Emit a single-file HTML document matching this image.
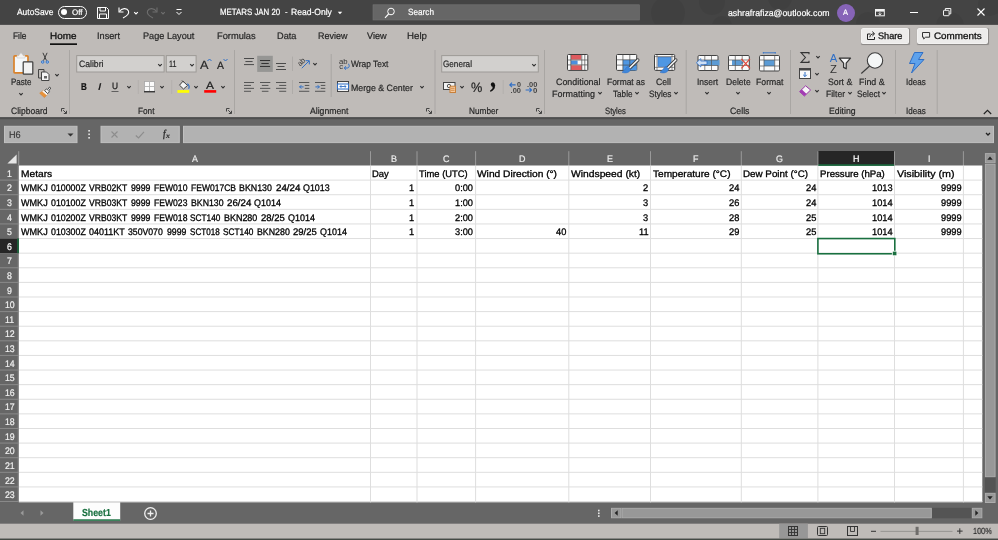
<!DOCTYPE html>
<html><head><meta charset="utf-8"><title>METARS JAN 20 - Excel</title>
<style>
html,body{margin:0;padding:0;}
body{width:998px;height:540px;overflow:hidden;position:relative;background:#666;font-family:"Liberation Sans",sans-serif;}
.a{position:absolute;box-sizing:border-box;}
svg.a{overflow:visible;}
.t{position:absolute;white-space:pre;transform-origin:0 50%;display:block;line-height:20px;text-rendering:geometricPrecision;-webkit-text-stroke:0.2px currentColor;}
#w{position:absolute;left:0;top:0;width:998px;height:540px;will-change:transform;}
</style></head><body><div id="w">
<svg class="a" style="left:0.00px;top:0.00px" width="998" height="540" viewBox="0 0 998 540"><rect x="0" y="0" width="998" height="540" fill="#666666"/>
<rect x="0" y="0" width="998" height="24.9" fill="#444444"/>
<rect x="0" y="24.9" width="998" height="92.4" fill="#bfbbb8"/>
<rect x="0" y="117.2" width="998" height="2" fill="#4e4e4e"/>
<rect x="0" y="523.7" width="998" height="15" fill="#bfbbb8"/>
<rect x="779.2" y="523.7" width="28.7" height="15" fill="#979797"/>
<rect x="0" y="538.7" width="998" height="1.3" fill="#454a45"/></svg>
<svg class="a" style="left:0;top:0;overflow:hidden" width="998" height="24" viewBox="0 0 998 24"><g fill="#000" fill-opacity="0.055"><circle cx="668" cy="13" r="17"/><circle cx="712" cy="2" r="13"/><circle cx="722" cy="26" r="10"/><circle cx="780" cy="-2" r="12"/><circle cx="868" cy="24" r="12"/><circle cx="950" cy="26" r="14"/><circle cx="990" cy="4" r="12"/></g></svg>
<span class="t" style="left:16.50px;top:2.25px;font-size:9px;color:#fff;transform:scaleX(0.9355);">AutoSave</span>
<div class="a" style="left:58.00px;top:6.00px;width:28.50px;height:12.50px;border:1px solid #fff;border-radius:7px;"></div>
<div class="a" style="left:61.00px;top:9.20px;width:6.00px;height:6.00px;background:#fff;border-radius:50%;"></div>
<span class="t" style="left:72.00px;top:3.25px;font-size:8px;color:#fff;transform:scaleX(0.9943);">Off</span>
<svg class="a" style="left:97.00px;top:6.50px" width="12" height="12" viewBox="0 0 12 12"><path d="M0.5 0.5 H9.5 L11.5 2.5 V11.5 H0.5 Z" fill="none" stroke="#fff" stroke-width="1"/><path d="M3 0.5 V4 H8.5 V0.5 M2.5 11.5 V7 H9.5 V11.5" fill="none" stroke="#fff" stroke-width="1"/></svg>
<svg class="a" style="left:118.00px;top:6.00px" width="13" height="13" viewBox="0 0 13 13"><path d="M1 1.5 V6 H5.5" fill="none" stroke="#fff" stroke-width="1.1"/><path d="M1.5 5.5 C3.5 2 9 1.5 10.5 5 C11.5 8 8 10.5 5 12" fill="none" stroke="#fff" stroke-width="1.1"/></svg>
<svg class="a" style="left:131.50px;top:8.50px" width="8" height="8" viewBox="0 0 8 8"><path d="M2.2 3.1 L4 4.9 L5.8 3.1" fill="none" stroke="#fff" stroke-width="1.15"/></svg>
<svg class="a" style="left:146.00px;top:6.00px" width="13" height="13" viewBox="0 0 13 13"><path d="M11 1.5 V6 H6.5" fill="none" stroke="#6e6e6e" stroke-width="1.1"/><path d="M10.5 5.5 C8.5 2 3 1.5 1.5 5 C0.5 8 4 10.5 7 12" fill="none" stroke="#6e6e6e" stroke-width="1.1"/></svg>
<svg class="a" style="left:159.00px;top:8.50px" width="8" height="8" viewBox="0 0 8 8"><path d="M2.2 3.1 L4 4.9 L5.8 3.1" fill="none" stroke="#6e6e6e" stroke-width="1.15"/></svg>
<svg class="a" style="left:175.00px;top:8.00px" width="8" height="8" viewBox="0 0 8 8"><path d="M1.5 1.5 H6.5" stroke="#fff" stroke-width="1"/><path d="M1.5 4 L4 6.5 L6.5 4" fill="none" stroke="#fff" stroke-width="1"/></svg>
<div class="a" style="left:0;top:0"><span class="t" style="left:219.50px;top:2.25px;font-size:9px;color:#fff;transform:scaleX(0.8744);">METARS JAN 20</span> 
<span class="t" style="left:284.60px;top:2.25px;font-size:9px;color:#fff;transform:scaleX(0.8624);">-</span> 
<span class="t" style="left:291.40px;top:2.25px;font-size:9px;color:#fff;transform:scaleX(0.9507);">Read-Only</span></div>
<svg class="a" style="left:336.50px;top:11.00px" width="6" height="4" viewBox="0 0 6 4"><path d="M0.8 0.8 L3 3.2 L5.2 0.8 Z" fill="#fff"/></svg>
<svg class="a" style="left:372px;top:4px" width="269" height="17"><g transform="translate(0.70 0.50)"><rect x="0.3" y="0.3" width="266.40" height="15.20" fill="#666666" stroke="#747474" stroke-width="0.6"/></g></svg>
<svg class="a" style="left:384.00px;top:6.50px" width="12" height="12" viewBox="0 0 12 12"><circle cx="7" cy="4.5" r="3.3" fill="none" stroke="#fff" stroke-width="1"/><path d="M4.6 7 L1 10.8" stroke="#fff" stroke-width="1.1"/></svg>
<span class="t" style="left:408.00px;top:2.25px;font-size:9px;color:#fff;transform:scaleX(0.9113);">Search</span>
<span class="t" style="left:728.00px;top:3.25px;font-size:9px;color:#fff;transform:scaleX(0.9697);">ashrafrafiza@outlook.com</span>
<div class="a" style="left:836.50px;top:3.50px;width:18.00px;height:18.00px;background:#8764b8;border-radius:50%;"></div>
<span class="t" style="left:843.00px;top:3.25px;font-size:8px;color:#fff;transform:scaleX(0.9328);">A</span>
<svg class="a" style="left:875.00px;top:8.50px" width="10" height="8" viewBox="0 0 10 8"><rect x="0.5" y="0.5" width="8.8" height="6.3" fill="none" stroke="#f2f2f2" stroke-width="1"/><rect x="1" y="1" width="8" height="1.6" fill="#f2f2f2"/><path d="M4.9 3.2 V5.8 M3.4 4.5 L4.9 6 L6.4 4.5" stroke="#f2f2f2" stroke-width="0.9" fill="none"/></svg>
<svg class="a" style="left:910px;top:12px" width="10" height="3"><g transform="translate(0.00 0.00)"><rect x="0" y="0" width="8.00" height="1.00" fill="#fff"/></g></svg>
<svg class="a" style="left:943.30px;top:8.20px" width="9" height="9" viewBox="0 0 9 9"><rect x="0.5" y="2.3" width="5.6" height="5.4" rx="0.6" fill="none" stroke="#f2f2f2" stroke-width="1"/><path d="M2.4 2.3 V0.5 H7.8 V5.8 H6.1" fill="none" stroke="#f2f2f2" stroke-width="1"/></svg>
<svg class="a" style="left:976.50px;top:8.00px" width="8" height="8" viewBox="0 0 8 8"><path d="M0.5 0.5 L7.5 7.5 M7.5 0.5 L0.5 7.5" stroke="#fff" stroke-width="1.1"/></svg>
<span class="t" style="left:12.50px;top:26.25px;font-size:9.4px;color:#262626;transform:scaleX(0.8920);">File</span>
<span class="t" style="left:50.00px;top:26.25px;font-size:9.4px;color:#111;transform:scaleX(1.0559);-webkit-text-stroke:0.3px #111;">Home</span>
<svg class="a" style="left:50px;top:43px" width="29" height="3"><g transform="translate(0.00 0.30)"><rect x="0" y="0" width="27.00" height="1.70" fill="#111"/></g></svg>
<span class="t" style="left:97.00px;top:26.25px;font-size:9.4px;color:#262626;transform:scaleX(0.9787);">Insert</span>
<span class="t" style="left:143.00px;top:26.25px;font-size:9.4px;color:#262626;transform:scaleX(0.9757);">Page Layout</span>
<span class="t" style="left:216.50px;top:26.25px;font-size:9.4px;color:#262626;transform:scaleX(0.9898);">Formulas</span>
<span class="t" style="left:276.80px;top:26.25px;font-size:9.4px;color:#262626;transform:scaleX(0.9808);">Data</span>
<span class="t" style="left:317.50px;top:26.25px;font-size:9.4px;color:#262626;transform:scaleX(0.9568);">Review</span>
<span class="t" style="left:367.00px;top:26.25px;font-size:9.4px;color:#262626;transform:scaleX(0.9797);">View</span>
<span class="t" style="left:407.00px;top:26.25px;font-size:9.4px;color:#262626;transform:scaleX(1.0354);">Help</span>
<div class="a" style="left:861.00px;top:28.00px;width:48.20px;height:16.00px;background:#edeceb;border:1px solid #f3f2f1;border-radius:1.5px;box-shadow:0.3px 0.6px 0.8px rgba(0,0,0,0.28);"></div>
<svg class="a" style="left:866.50px;top:31.00px" width="9" height="9" viewBox="0 0 9 9"><path d="M3.5 3 H0.5 V8.5 H7.5 V6" fill="none" stroke="#222" stroke-width="1"/><path d="M2.8 6.3 C3 4 4.5 2.8 7 2.8 M5.3 0.6 L7.6 2.8 L5.3 5" fill="none" stroke="#222" stroke-width="1"/></svg>
<span class="t" style="left:878.00px;top:26.25px;font-size:9.4px;color:#111;transform:scaleX(0.9762);-webkit-text-stroke:0.3px #111;">Share</span>
<div class="a" style="left:917.00px;top:28.00px;width:71.20px;height:16.00px;background:#edeceb;border:1px solid #f3f2f1;border-radius:1.5px;box-shadow:0.3px 0.6px 0.8px rgba(0,0,0,0.28);"></div>
<svg class="a" style="left:922.20px;top:32.00px" width="9" height="9" viewBox="0 0 9 9"><path d="M0.5 0.5 H7.6 V5.2 H3.6 L1.7 7 V5.2 H0.5 Z" fill="none" stroke="#333" stroke-width="1"/></svg>
<span class="t" style="left:933.50px;top:26.25px;font-size:9.4px;color:#111;transform:scaleX(1.0517);-webkit-text-stroke:0.3px #111;">Comments</span>
<svg class="a" style="left:13.00px;top:52.00px" width="21" height="24" viewBox="0 0 21 24"><rect x="1" y="3.8" width="14" height="17" rx="0.8" fill="#f4f7f9" stroke="#d9822b" stroke-width="1.7"/>
<path d="M4 6 V3.6 H5.8 L8 0.8 L10.2 3.6 H12 V6 Z" fill="#f2f2f2" stroke="#c9c9c9" stroke-width="0.6"/>
<rect x="10.2" y="9.8" width="9.6" height="12.4" rx="0.8" fill="#f2f2f2" stroke="#3d3d3d" stroke-width="1.2"/></svg>
<span class="t" style="left:11.00px;top:72.25px;font-size:9.2px;color:#262626;transform:scaleX(0.8721);">Paste</span>
<svg class="a" style="left:16.70px;top:89.90px" width="8" height="8" viewBox="0 0 8 8"><path d="M2.3 3.15 L4 4.85 L5.7 3.15" fill="none" stroke="#333" stroke-width="1.15"/></svg>
<svg class="a" style="left:41.00px;top:52.00px" width="8" height="12" viewBox="0 0 8 12"><path d="M1.9 0.8 L5.5 8.6 M6.1 0.8 L2.5 8.6" stroke="#3d3d3d" stroke-width="1" fill="none"/><circle cx="1.7" cy="10" r="1.25" fill="#9cc2ee" stroke="#2f6fc6" stroke-width="0.9"/><circle cx="6.3" cy="10" r="1.25" fill="#9cc2ee" stroke="#2f6fc6" stroke-width="0.9"/></svg>
<svg class="a" style="left:38.00px;top:69.00px" width="13" height="12" viewBox="0 0 13 12"><path d="M0.5 0.5 H6 V3 M0.5 0.5 V9 H3.5" fill="none" stroke="#444" stroke-width="1"/><path d="M3.5 3 H8.5 L11 5.5 V11.5 H3.5 Z" fill="#f4f4f4" stroke="#444" stroke-width="1"/><rect x="6" y="7" width="3" height="2.5" fill="#666"/></svg>
<svg class="a" style="left:53.20px;top:71.20px" width="8" height="8" viewBox="0 0 8 8"><path d="M2.3 3.15 L4 4.85 L5.7 3.15" fill="none" stroke="#333" stroke-width="1.15"/></svg>
<svg class="a" style="left:38.50px;top:86.00px" width="13" height="12" viewBox="0 0 13 12"><path d="M0.7 7.2 L4.6 4.4 L8.8 8 L5.4 11.6 Z" fill="#e8923a" stroke="#d9822b" stroke-width="0.6"/><path d="M3.2 5.6 L4.8 4.3 L8.9 7.9 L7.7 9.3 Z" fill="#f7f7f7"/><path d="M5.6 4.6 L7.4 3 L8.4 3.9 L10.6 1 L11.8 2 L9.6 5 L10.4 5.8 L8.7 7.6 Z" fill="#f4f4f4" stroke="#3d3d3d" stroke-width="0.9" stroke-linejoin="round"/></svg>
<span class="t" style="left:10.50px;top:101.25px;font-size:9.2px;color:#262626;transform:scaleX(0.9270);">Clipboard</span>
<svg class="a" style="left:61.00px;top:108.00px" width="6" height="6" viewBox="0 0 6 6"><path d="M0.5 3.5 V0.5 H3.5" fill="none" stroke="#444" stroke-width="1"/><path d="M2.2 2.2 L5.3 5.3 M5.5 2.8 V5.5 H2.8" fill="none" stroke="#444" stroke-width="1"/></svg>
<svg class="a" style="left:69px;top:50px" width="3" height="66"><g transform="translate(0.00 0.00)"><rect x="0" y="0" width="1.00" height="64.00" fill="#a9a6a3"/></g></svg>
<svg class="a" style="left:76px;top:55px" width="90" height="19"><g transform="translate(0.20 0.10)"><rect x="0.5" y="0.5" width="87.40" height="16.40" fill="#d2d0ce" stroke="#9d9a97" stroke-width="1.0"/></g></svg>
<span class="t" style="left:78.50px;top:54.25px;font-size:9.2px;color:#262626;transform:scaleX(0.9393);">Calibri</span>
<svg class="a" style="left:156.00px;top:60.50px" width="8" height="8" viewBox="0 0 8 8"><path d="M2.2 3.1 L4 4.9 L5.8 3.1" fill="none" stroke="#333" stroke-width="1.15"/></svg>
<svg class="a" style="left:165px;top:55px" width="32" height="19"><g transform="translate(0.80 0.10)"><rect x="0.5" y="0.5" width="29.80" height="16.40" fill="#d2d0ce" stroke="#9d9a97" stroke-width="1.0"/></g></svg>
<span class="t" style="left:168.50px;top:54.25px;font-size:9.2px;color:#262626;transform:scaleX(0.7839);">11</span>
<svg class="a" style="left:188.00px;top:60.50px" width="8" height="8" viewBox="0 0 8 8"><path d="M2.2 3.1 L4 4.9 L5.8 3.1" fill="none" stroke="#333" stroke-width="1.15"/></svg>
<span class="t" style="left:200.00px;top:55.25px;font-size:12px;color:#262626;transform:scaleX(1.0572);">A</span>
<svg class="a" style="left:207.00px;top:57.50px" width="5" height="4" viewBox="0 0 5 4"><path d="M0.5 3 L2.5 1 L4.5 3" fill="none" stroke="#2f6fc6" stroke-width="1"/></svg>
<span class="t" style="left:216.50px;top:56.25px;font-size:10.5px;color:#262626;transform:scaleX(0.9950);">A</span>
<svg class="a" style="left:222.50px;top:57.50px" width="5" height="4" viewBox="0 0 5 4"><path d="M0.5 1 L2.5 3 L4.5 1" fill="none" stroke="#2f6fc6" stroke-width="1"/></svg>
<span class="t" style="left:81.20px;top:78.25px;font-size:10px;color:#111;transform:scaleX(0.8056);font-weight:bold;">B</span>
<span class="t" style="left:98.00px;top:78.25px;font-size:9.8px;color:#111;transform:scaleX(1.2026);font-style:italic;">I</span>
<span class="t" style="left:112.00px;top:76.25px;font-size:9.2px;color:#111;transform:scaleX(0.9058);">U</span>
<svg class="a" style="left:111px;top:91px" width="9" height="2"><g transform="translate(0.50 0.00)"><rect x="0" y="0" width="7.00" height="0.90" fill="#555"/></g></svg>
<svg class="a" style="left:124.50px;top:83.00px" width="8" height="8" viewBox="0 0 8 8"><path d="M2.3 3.15 L4 4.85 L5.7 3.15" fill="none" stroke="#333" stroke-width="1.15"/></svg>
<svg class="a" style="left:137px;top:80px" width="3" height="16"><g transform="translate(0.80 0.00)"><rect x="0" y="0" width="1.00" height="14.00" fill="#b3b0ad"/></g></svg>
<svg class="a" style="left:144.00px;top:81.30px" width="11" height="12" viewBox="0 0 11 12"><rect x="0.5" y="0.5" width="10" height="10" fill="#fbfbfb" stroke="#a6a6a6" stroke-width="0.8"/><path d="M5.5 0.5 V10.5 M0.5 5.5 H10.5" stroke="#b0b0b0" stroke-width="0.9"/><path d="M0 10.7 H11" stroke="#3a3a3a" stroke-width="1.5"/></svg>
<svg class="a" style="left:158.20px;top:83.00px" width="8" height="8" viewBox="0 0 8 8"><path d="M2.3 3.15 L4 4.85 L5.7 3.15" fill="none" stroke="#333" stroke-width="1.15"/></svg>
<svg class="a" style="left:171px;top:80px" width="3" height="16"><g transform="translate(0.20 0.00)"><rect x="0" y="0" width="1.00" height="14.00" fill="#b3b0ad"/></g></svg>
<svg class="a" style="left:178.00px;top:80.00px" width="12" height="13" viewBox="0 0 12 13"><path d="M5 1.2 L9.5 5.5 L5.5 9 L1.5 5.2 Z" fill="#f4f4f4" stroke="#444" stroke-width="1"/><path d="M4 0.5 L6 2.5" stroke="#444" stroke-width="1"/><path d="M9.3 3.8 C11.3 5 11.6 7.2 10.6 8.8" fill="none" stroke="#2f6fc6" stroke-width="1.2"/><rect x="-0.6" y="10.1" width="11.8" height="2.7" fill="#ffff00"/></svg>
<svg class="a" style="left:191.60px;top:83.00px" width="8" height="8" viewBox="0 0 8 8"><path d="M2.3 3.15 L4 4.85 L5.7 3.15" fill="none" stroke="#333" stroke-width="1.15"/></svg>
<span class="t" style="left:206.00px;top:76.25px;font-size:10.5px;color:#222;transform:scaleX(1.1372);">A</span>
<svg class="a" style="left:204px;top:90px" width="14" height="4"><g transform="translate(0.20 0.10)"><rect x="0" y="0" width="12.00" height="2.60" fill="#ff0000"/></g></svg>
<svg class="a" style="left:218.60px;top:83.00px" width="8" height="8" viewBox="0 0 8 8"><path d="M2.3 3.15 L4 4.85 L5.7 3.15" fill="none" stroke="#333" stroke-width="1.15"/></svg>
<span class="t" style="left:137.50px;top:101.25px;font-size:9.2px;color:#262626;transform:scaleX(0.8967);">Font</span>
<svg class="a" style="left:226.00px;top:108.00px" width="6" height="6" viewBox="0 0 6 6"><path d="M0.5 3.5 V0.5 H3.5" fill="none" stroke="#444" stroke-width="1"/><path d="M2.2 2.2 L5.3 5.3 M5.5 2.8 V5.5 H2.8" fill="none" stroke="#444" stroke-width="1"/></svg>
<svg class="a" style="left:234px;top:50px" width="3" height="66"><g transform="translate(0.00 0.00)"><rect x="0" y="0" width="1.00" height="64.00" fill="#a9a6a3"/></g></svg>
<svg class="a" style="left:244.00px;top:57.90px" width="10" height="9.149999999999999" viewBox="0 0 10 9.149999999999999"><rect x="0.0" y="0.0" width="10" height="1" fill="#4a4a4a"/><rect x="1.4" y="3.05" width="7.2" height="1" fill="#4a4a4a"/><rect x="0.0" y="6.1" width="10" height="1" fill="#4a4a4a"/></svg>
<svg class="a" style="left:257px;top:55px" width="17" height="18"><g transform="translate(0.20 0.80)"><rect x="0" y="0" width="15.60" height="16.10" fill="#969694"/></g></svg>
<svg class="a" style="left:260.10px;top:59.80px" width="10.1" height="8.94" viewBox="0 0 10.1 8.94"><rect x="0.0" y="0.0" width="10.1" height="1" fill="#333"/><rect x="1.3499999999999996" y="2.98" width="7.4" height="1" fill="#333"/><rect x="0.0" y="5.96" width="10.1" height="1" fill="#333"/></svg>
<svg class="a" style="left:276.10px;top:62.70px" width="10" height="9.0" viewBox="0 0 10 9.0"><rect x="0.0" y="0.0" width="10" height="1" fill="#4a4a4a"/><rect x="1.5" y="3.0" width="7" height="1" fill="#4a4a4a"/><rect x="0.0" y="6.0" width="10" height="1" fill="#4a4a4a"/></svg>
<svg class="a" style="left:292px;top:56px" width="3" height="16"><g transform="translate(0.00 0.60)"><rect x="0" y="0" width="1.00" height="14.40" fill="#aeaba8"/></g></svg>
<svg class="a" style="left:297.00px;top:57.00px" width="14" height="13" viewBox="0 0 14 13"><path d="M4.8 11.2 L12 4 M8.6 3.7 H12.3 V7.4" fill="none" stroke="#2f6fc6" stroke-width="1"/><text x="1.2" y="7.6" font-size="7.6" font-family="Liberation Sans,sans-serif" fill="#333" transform="rotate(-45 4.5 6)" textLength="8" lengthAdjust="spacingAndGlyphs">ab</text></svg>
<svg class="a" style="left:311.30px;top:59.80px" width="8" height="8" viewBox="0 0 8 8"><path d="M2.3 3.15 L4 4.85 L5.7 3.15" fill="none" stroke="#333" stroke-width="1.15"/></svg>
<svg class="a" style="left:330px;top:54px" width="3" height="45"><g transform="translate(0.70 0.00)"><rect x="0" y="0" width="1.00" height="43.00" fill="#a9a6a3"/></g></svg>
<svg class="a" style="left:337.50px;top:57.00px" width="12" height="13" viewBox="0 0 12 13"><text x="1" y="6.6" font-size="7.6" font-family="Liberation Sans,sans-serif" fill="#333" textLength="8.6" lengthAdjust="spacingAndGlyphs">ab</text><text x="1.2" y="12.2" font-size="7.6" font-family="Liberation Sans,sans-serif" fill="#333">c</text><path d="M10 6.8 C11.8 7.5 11.6 11 9.3 11 H6.4 M8 9.3 L6.2 11 L8 12.7" fill="none" stroke="#2f6fc6" stroke-width="1"/></svg>
<span class="t" style="left:350.50px;top:54.25px;font-size:9.2px;color:#262626;transform:scaleX(0.9129);">Wrap Text</span>
<svg class="a" style="left:244.00px;top:81.70px" width="10" height="11.72" viewBox="0 0 10 11.72"><rect x="0" y="0.0" width="10" height="1" fill="#555"/><rect x="0" y="2.93" width="7" height="1" fill="#555"/><rect x="0" y="5.86" width="10" height="1" fill="#555"/><rect x="0" y="8.790000000000001" width="7" height="1" fill="#555"/></svg>
<svg class="a" style="left:260.00px;top:81.70px" width="10.3" height="11.72" viewBox="0 0 10.3 11.72"><rect x="0.0" y="0.0" width="10.3" height="1" fill="#555"/><rect x="1.8500000000000005" y="2.93" width="6.6" height="1" fill="#555"/><rect x="0.0" y="5.86" width="10.3" height="1" fill="#555"/><rect x="1.8500000000000005" y="8.790000000000001" width="6.6" height="1" fill="#555"/></svg>
<svg class="a" style="left:276.00px;top:81.70px" width="10.2" height="11.72" viewBox="0 0 10.2 11.72"><rect x="0.0" y="0.0" width="10.2" height="1" fill="#555"/><rect x="3.1999999999999993" y="2.93" width="7" height="1" fill="#555"/><rect x="0.0" y="5.86" width="10.2" height="1" fill="#555"/><rect x="3.1999999999999993" y="8.790000000000001" width="7" height="1" fill="#555"/></svg>
<svg class="a" style="left:292px;top:80px" width="3" height="16"><g transform="translate(0.00 0.00)"><rect x="0" y="0" width="1.00" height="14.00" fill="#aeaba8"/></g></svg>
<svg class="a" style="left:298.70px;top:81.70px" width="11" height="10" viewBox="0 0 11 10"><path d="M0 0.5 H10.3 M5.8 3.43 H10.3 M5.8 6.36 H10.3 M0 9.29 H10.3" stroke="#555" stroke-width="1"/><path d="M4.6 4.9 H0.6 M2.3 3.2 L0.6 4.9 L2.3 6.6" fill="none" stroke="#2f6fc6" stroke-width="1"/></svg>
<svg class="a" style="left:314.70px;top:81.70px" width="11" height="10" viewBox="0 0 11 10"><path d="M0 0.5 H10.3 M5.8 3.43 H10.3 M5.8 6.36 H10.3 M0 9.29 H10.3" stroke="#555" stroke-width="1"/><path d="M0.4 4.9 H4.4 M2.7 3.2 L4.4 4.9 L2.7 6.6" fill="none" stroke="#2f6fc6" stroke-width="1"/></svg>
<svg class="a" style="left:336.50px;top:81.30px" width="12" height="11" viewBox="0 0 12 11"><rect x="0.5" y="0.5" width="11" height="10" fill="#f4f4f4" stroke="#444" stroke-width="1"/><rect x="0.5" y="3" width="11" height="5" fill="#fff" stroke="#2f6fc6" stroke-width="1"/><path d="M3 5.5 H9 M4.3 4.2 L3 5.5 L4.3 6.8 M7.7 4.2 L9 5.5 L7.7 6.8" fill="none" stroke="#2f6fc6" stroke-width="0.9"/></svg>
<span class="t" style="left:350.50px;top:78.25px;font-size:9.2px;color:#262626;transform:scaleX(0.9546);">Merge &amp; Center</span>
<svg class="a" style="left:418.30px;top:83.00px" width="8" height="8" viewBox="0 0 8 8"><path d="M2.3 3.15 L4 4.85 L5.7 3.15" fill="none" stroke="#333" stroke-width="1.15"/></svg>
<span class="t" style="left:309.50px;top:101.25px;font-size:9.2px;color:#262626;transform:scaleX(0.9415);">Alignment</span>
<svg class="a" style="left:426.00px;top:108.00px" width="6" height="6" viewBox="0 0 6 6"><path d="M0.5 3.5 V0.5 H3.5" fill="none" stroke="#444" stroke-width="1"/><path d="M2.2 2.2 L5.3 5.3 M5.5 2.8 V5.5 H2.8" fill="none" stroke="#444" stroke-width="1"/></svg>
<svg class="a" style="left:434px;top:50px" width="3" height="66"><g transform="translate(0.50 0.00)"><rect x="0" y="0" width="1.00" height="64.00" fill="#a9a6a3"/></g></svg>
<svg class="a" style="left:441px;top:55px" width="99" height="19"><g transform="translate(0.20 0.10)"><rect x="0.5" y="0.5" width="96.60" height="16.40" fill="#d2d0ce" stroke="#9d9a97" stroke-width="1.0"/></g></svg>
<span class="t" style="left:443.00px;top:54.25px;font-size:9.2px;color:#262626;transform:scaleX(0.8854);">General</span>
<svg class="a" style="left:530.30px;top:60.50px" width="8" height="8" viewBox="0 0 8 8"><path d="M2.2 3.1 L4 4.9 L5.8 3.1" fill="none" stroke="#333" stroke-width="1.15"/></svg>
<svg class="a" style="left:442.50px;top:82.00px" width="14" height="11" viewBox="0 0 14 11"><rect x="0.5" y="0.5" width="11.5" height="7" fill="#f2f2f2" stroke="#444" stroke-width="1"/><circle cx="6" cy="4" r="1.7" fill="none" stroke="#444" stroke-width="0.9"/><rect x="7" y="4.2" width="5.5" height="6.3" fill="#f6c89b" stroke="#c8803a" stroke-width="1"/><path d="M8 6.3 H11.5 M8 8.3 H11.5" stroke="#c8803a" stroke-width="0.8"/></svg>
<svg class="a" style="left:457.60px;top:83.00px" width="8" height="8" viewBox="0 0 8 8"><path d="M2.3 3.15 L4 4.85 L5.7 3.15" fill="none" stroke="#333" stroke-width="1.15"/></svg>
<span class="t" style="left:470.70px;top:78.25px;font-size:13.6px;color:#222;transform:scaleX(0.9336);">%</span>
<span class="t" style="left:489.60px;top:68.25px;font-size:30px;color:#111;transform:scaleX(0.8000);font-weight:bold;font-family:'Liberation Serif',serif;">,</span>
<svg class="a" style="left:502px;top:80px" width="3" height="16"><g transform="translate(0.70 0.00)"><rect x="0" y="0" width="1.00" height="14.00" fill="#b3b0ad"/></g></svg>
<svg class="a" style="left:508.50px;top:80.50px" width="13" height="12" viewBox="0 0 13 12"><path d="M6.6 3.9 H1 M3 1.7 L0.8 3.9 L3 6.1" fill="none" stroke="#2f6fc6" stroke-width="1.1"/><text x="8" y="5.8" font-size="7" font-family="Liberation Sans,sans-serif" font-weight="bold" fill="#444" textLength="4" lengthAdjust="spacingAndGlyphs">0</text><text x="1.6" y="11.6" font-size="7" font-family="Liberation Sans,sans-serif" font-weight="bold" fill="#444" textLength="10.4" lengthAdjust="spacingAndGlyphs">.00</text></svg>
<svg class="a" style="left:524.50px;top:80.50px" width="13" height="12" viewBox="0 0 13 12"><text x="2" y="5.8" font-size="7" font-family="Liberation Sans,sans-serif" font-weight="bold" fill="#444" textLength="10.4" lengthAdjust="spacingAndGlyphs">.00</text><path d="M0.6 9 H6.4 M4.4 6.8 L6.6 9 L4.4 11.2" fill="none" stroke="#2f6fc6" stroke-width="1.1"/><text x="8" y="11.6" font-size="7" font-family="Liberation Sans,sans-serif" font-weight="bold" fill="#444" textLength="4.4" lengthAdjust="spacingAndGlyphs">0</text></svg>
<span class="t" style="left:469.40px;top:101.25px;font-size:9.2px;color:#262626;transform:scaleX(0.8989);">Number</span>
<svg class="a" style="left:536.00px;top:108.00px" width="6" height="6" viewBox="0 0 6 6"><path d="M0.5 3.5 V0.5 H3.5" fill="none" stroke="#444" stroke-width="1"/><path d="M2.2 2.2 L5.3 5.3 M5.5 2.8 V5.5 H2.8" fill="none" stroke="#444" stroke-width="1"/></svg>
<svg class="a" style="left:544px;top:50px" width="3" height="66"><g transform="translate(0.00 0.00)"><rect x="0" y="0" width="1.00" height="64.00" fill="#a9a6a3"/></g></svg>
<svg class="a" style="left:567.40px;top:54.30px" width="21" height="17" viewBox="0 0 21 17"><rect x="0.5" y="0.5" width="20.3" height="15.9" rx="1" fill="#fafafa" stroke="#3d3d3d" stroke-width="1"/>
<rect x="4" y="1" width="10.2" height="4.6" fill="#de5b5f"/><rect x="4" y="6.6" width="6.6" height="3.8" fill="#4a8fe0"/><rect x="4" y="11.3" width="10.8" height="4.7" fill="#de5b5f"/>
<path d="M3.8 0.5 V16.4 M14.8 0.5 V16.4 M17.8 0.5 V16.4 M0.5 6 H20.8 M0.5 10.9 H20.8" stroke="#4a4a4a" stroke-width="0.7" fill="none"/></svg>
<span class="t" style="left:555.50px;top:72.25px;font-size:9.2px;color:#262626;transform:scaleX(0.9664);">Conditional</span>
<span class="t" style="left:552.00px;top:84.25px;font-size:9.2px;color:#262626;transform:scaleX(0.9778);">Formatting</span>
<svg class="a" style="left:596.00px;top:89.30px" width="8" height="8" viewBox="0 0 8 8"><path d="M2.3 3.15 L4 4.85 L5.7 3.15" fill="none" stroke="#333" stroke-width="1.15"/></svg>
<svg class="a" style="left:615.60px;top:54.30px" width="24" height="20" viewBox="0 0 24 20"><rect x="0.5" y="0.5" width="20.2" height="15.9" rx="1" fill="#fafafa" stroke="#3d3d3d" stroke-width="1"/>
<rect x="6.9" y="5.9" width="13.8" height="10.5" fill="#4f97e3"/>
<path d="M6.9 0.5 V16.4 M13.8 0.5 V16.4 M0.5 5.8 H20.7 M0.5 11.1 H20.7" stroke="#4a4a4a" stroke-width="0.7" fill="none"/>
<path d="M21.8 6 L13.4 14.2" stroke="#3d3d3d" stroke-width="3.3" stroke-linecap="round"/><path d="M21.8 6 L13.6 14" stroke="#f4f4f4" stroke-width="1.7" stroke-linecap="round"/><path d="M12.2 12.6 C9.5 12.8 9.6 16.2 6 18.2 C9.5 19.8 14.2 18.6 14.6 15 Z" fill="#3f86d9" stroke="#2f6fc6" stroke-width="0.5"/></svg>
<span class="t" style="left:607.00px;top:72.25px;font-size:9.2px;color:#262626;transform:scaleX(0.9179);">Format as</span>
<span class="t" style="left:612.50px;top:84.25px;font-size:9.2px;color:#262626;transform:scaleX(0.8868);">Table</span>
<svg class="a" style="left:632.70px;top:89.30px" width="8" height="8" viewBox="0 0 8 8"><path d="M2.3 3.15 L4 4.85 L5.7 3.15" fill="none" stroke="#333" stroke-width="1.15"/></svg>
<svg class="a" style="left:653.60px;top:54.30px" width="24" height="20" viewBox="0 0 24 20"><rect x="0.5" y="0.5" width="20.2" height="15.9" rx="1" fill="#fafafa" stroke="#3d3d3d" stroke-width="1"/>
<rect x="4" y="3.2" width="13" height="9.3" fill="#4f97e3" stroke="#2f6fc6" stroke-width="0.6"/>
<path d="M3 0.5 V16.4 M18 0.5 V16.4 M0.5 2.6 H20.7 M0.5 13.4 H20.7" stroke="#4a4a4a" stroke-width="0.6" fill="none"/>
<path d="M21.8 6 L13.4 14.2" stroke="#3d3d3d" stroke-width="3.3" stroke-linecap="round"/><path d="M21.8 6 L13.6 14" stroke="#f4f4f4" stroke-width="1.7" stroke-linecap="round"/><path d="M12.2 12.6 C9.5 12.8 9.6 16.2 6 18.2 C9.5 19.8 14.2 18.6 14.6 15 Z" fill="#3f86d9" stroke="#2f6fc6" stroke-width="0.5"/></svg>
<span class="t" style="left:656.30px;top:72.25px;font-size:9.2px;color:#262626;transform:scaleX(0.9452);">Cell</span>
<span class="t" style="left:648.80px;top:84.25px;font-size:9.2px;color:#262626;transform:scaleX(0.8975);">Styles</span>
<svg class="a" style="left:671.70px;top:89.30px" width="8" height="8" viewBox="0 0 8 8"><path d="M2.3 3.15 L4 4.85 L5.7 3.15" fill="none" stroke="#333" stroke-width="1.15"/></svg>
<span class="t" style="left:604.50px;top:101.25px;font-size:9.2px;color:#262626;transform:scaleX(0.8377);">Styles</span>
<svg class="a" style="left:685px;top:50px" width="3" height="66"><g transform="translate(0.70 0.00)"><rect x="0" y="0" width="1.00" height="64.00" fill="#a9a6a3"/></g></svg>
<svg class="a" style="left:696.00px;top:55.00px" width="24" height="16" viewBox="0 0 24 16"><rect x="2" y="0.5" width="20" height="15" rx="1.2" fill="#fafafa" stroke="#444" stroke-width="1"/>
<rect x="8.5" y="5" width="15" height="5.5" fill="#5b9bd5"/>
<path d="M8.8 0.5 V15.5 M15.5 0.5 V15.5 M2 5 H22 M2 10.5 H22" stroke="#555" stroke-width="0.7" fill="none"/>
<path d="M0.4 7.8 L4.8 3.6 V6 H11 V9.6 H4.8 V12 Z" fill="#cfe0f5" stroke="#2f6fc6" stroke-width="0.8"/></svg>
<span class="t" style="left:696.80px;top:72.25px;font-size:9.2px;color:#262626;transform:scaleX(0.9217);">Insert</span>
<svg class="a" style="left:703.00px;top:89.30px" width="8" height="8" viewBox="0 0 8 8"><path d="M2.3 3.15 L4 4.85 L5.7 3.15" fill="none" stroke="#333" stroke-width="1.15"/></svg>
<svg class="a" style="left:727.50px;top:55.00px" width="24" height="16" viewBox="0 0 24 16"><rect x="0.5" y="0.5" width="20.8" height="15" rx="1.2" fill="#fafafa" stroke="#444" stroke-width="1"/>
<path d="M4 5 H12 L16 7.8 L12 10.5 H4 Z" fill="#5b9bd5"/>
<path d="M7.3 0.5 V15.5 M14.2 0.5 V15.5 M0.5 5 H21 M0.5 10.5 H21" stroke="#555" stroke-width="0.7" fill="none"/>
<path d="M13.4 3.8 L22 13.3 M22 3.8 L13.4 13.3" stroke="#e0473a" stroke-width="1.2"/></svg>
<span class="t" style="left:726.30px;top:72.25px;font-size:9.2px;color:#262626;transform:scaleX(0.9290);">Delete</span>
<svg class="a" style="left:734.00px;top:89.30px" width="8" height="8" viewBox="0 0 8 8"><path d="M2.3 3.15 L4 4.85 L5.7 3.15" fill="none" stroke="#333" stroke-width="1.15"/></svg>
<svg class="a" style="left:759.00px;top:51.50px" width="22" height="20" viewBox="0 0 22 20"><path d="M4.3 0.8 H16.3 M4.3 0 V1.6 M16.3 0 V1.6" stroke="#2f6fc6" stroke-width="0.9"/>
<rect x="0.5" y="3.5" width="20" height="15.5" rx="1.2" fill="#fafafa" stroke="#444" stroke-width="1"/>
<rect x="5" y="8" width="10.5" height="6" fill="#5b9bd5"/>
<path d="M5 3.5 V19 M15.7 3.5 V19 M0.5 8 H20.5 M0.5 14 H20.5" stroke="#555" stroke-width="0.7" fill="none"/></svg>
<span class="t" style="left:755.50px;top:72.25px;font-size:9.2px;color:#262626;transform:scaleX(0.9444);">Format</span>
<svg class="a" style="left:765.30px;top:89.30px" width="8" height="8" viewBox="0 0 8 8"><path d="M2.3 3.15 L4 4.85 L5.7 3.15" fill="none" stroke="#333" stroke-width="1.15"/></svg>
<span class="t" style="left:729.50px;top:101.25px;font-size:9.2px;color:#262626;transform:scaleX(0.9526);">Cells</span>
<svg class="a" style="left:790px;top:50px" width="3" height="66"><g transform="translate(0.00 0.00)"><rect x="0" y="0" width="1.00" height="64.00" fill="#a9a6a3"/></g></svg>
<svg class="a" style="left:800.00px;top:52.00px" width="10" height="11" viewBox="0 0 10 11"><path d="M9 2.3 V0.6 H1 L5.4 5.5 L1 10.4 H9 V8.7" fill="none" stroke="#333" stroke-width="1.1"/></svg>
<svg class="a" style="left:813.60px;top:53.00px" width="8" height="8" viewBox="0 0 8 8"><path d="M2.3 3.15 L4 4.85 L5.7 3.15" fill="none" stroke="#333" stroke-width="1.15"/></svg>
<svg class="a" style="left:799.00px;top:68.00px" width="12" height="11" viewBox="0 0 12 11"><rect x="0.5" y="0.5" width="11" height="10" fill="#fafafa" stroke="#444" stroke-width="1"/><rect x="0.5" y="0.5" width="11" height="2" fill="#444"/><path d="M6 4 V8.5 M4.2 6.8 L6 8.6 L7.8 6.8" fill="none" stroke="#2f6fc6" stroke-width="1"/></svg>
<svg class="a" style="left:812.60px;top:69.90px" width="8" height="8" viewBox="0 0 8 8"><path d="M2.3 3.15 L4 4.85 L5.7 3.15" fill="none" stroke="#333" stroke-width="1.15"/></svg>
<svg class="a" style="left:799.00px;top:84.50px" width="13" height="12" viewBox="0 0 13 12"><path d="M6.6 0.8 L11.6 5 L5.4 11 L0.6 6.6 Z" fill="#f6f6f6" stroke="#9b35a8" stroke-width="1" stroke-linejoin="round"/><path d="M2.9 4.5 L7.6 8.9 L5.4 11 L0.6 6.6 Z" fill="#a23bb3"/></svg>
<svg class="a" style="left:812.60px;top:86.80px" width="8" height="8" viewBox="0 0 8 8"><path d="M2.3 3.15 L4 4.85 L5.7 3.15" fill="none" stroke="#333" stroke-width="1.15"/></svg>
<svg class="a" style="left:830.00px;top:52.50px" width="21" height="20" viewBox="0 0 21 20"><text x="-0.3" y="9" font-size="11.3" font-family="Liberation Sans,sans-serif" fill="#2f6fc6">A</text><text x="0" y="19.6" font-size="11.3" font-family="Liberation Sans,sans-serif" fill="#333">Z</text><path d="M9.3 5.2 H20.5 L16.2 10.2 V15.8 L13.6 14.4 V10.2 Z" fill="#f6f6f6" stroke="#333" stroke-width="1.25" stroke-linejoin="round"/></svg>
<span class="t" style="left:827.50px;top:72.25px;font-size:9.2px;color:#262626;transform:scaleX(0.9501);">Sort &amp;</span>
<span class="t" style="left:826.30px;top:84.25px;font-size:9.2px;color:#262626;transform:scaleX(0.9303);">Filter</span>
<svg class="a" style="left:845.60px;top:89.30px" width="8" height="8" viewBox="0 0 8 8"><path d="M2.3 3.15 L4 4.85 L5.7 3.15" fill="none" stroke="#333" stroke-width="1.15"/></svg>
<svg class="a" style="left:861.00px;top:52.00px" width="23" height="22" viewBox="0 0 23 22"><circle cx="14" cy="8.5" r="7.7" fill="#f4f6f6" stroke="#3d3d3d" stroke-width="1.1"/><path d="M8.6 14 L0.3 21.5" stroke="#3d3d3d" stroke-width="1.2"/></svg>
<span class="t" style="left:859.30px;top:72.25px;font-size:9.2px;color:#262626;transform:scaleX(0.9666);">Find &amp;</span>
<span class="t" style="left:856.80px;top:84.25px;font-size:9.2px;color:#262626;transform:scaleX(0.8993);">Select</span>
<svg class="a" style="left:880.00px;top:89.30px" width="8" height="8" viewBox="0 0 8 8"><path d="M2.3 3.15 L4 4.85 L5.7 3.15" fill="none" stroke="#333" stroke-width="1.15"/></svg>
<span class="t" style="left:829.30px;top:101.25px;font-size:9.2px;color:#262626;transform:scaleX(0.9484);">Editing</span>
<svg class="a" style="left:895px;top:50px" width="3" height="66"><g transform="translate(0.00 0.00)"><rect x="0" y="0" width="1.00" height="64.00" fill="#a9a6a3"/></g></svg>
<svg class="a" style="left:908.00px;top:52.00px" width="17" height="22" viewBox="0 0 17 22"><path d="M6.5 0.5 H15 L10.5 7.5 H16 L3.5 21 L7 11.5 H1.5 Z" fill="#5ea2ec" stroke="#2f6fc6" stroke-width="1" stroke-linejoin="round"/></svg>
<span class="t" style="left:906.30px;top:72.25px;font-size:9.2px;color:#262626;transform:scaleX(0.8758);">Ideas</span>
<span class="t" style="left:906.30px;top:101.25px;font-size:9.2px;color:#262626;transform:scaleX(0.8758);">Ideas</span>
<svg class="a" style="left:936px;top:50px" width="3" height="66"><g transform="translate(0.70 0.00)"><rect x="0" y="0" width="1.00" height="64.00" fill="#a9a6a3"/></g></svg>
<svg class="a" style="left:983.00px;top:109.00px" width="9" height="6" viewBox="0 0 9 6"><path d="M0.8 5 L4.5 1.3 L8.2 5" fill="none" stroke="#222" stroke-width="1.1"/></svg>
<svg class="a" style="left:4px;top:125px" width="75" height="19"><g transform="translate(0.00 0.80)"><rect x="0.5" y="0.5" width="72.50" height="16.30" fill="#b2b2b2" stroke="#c0c0c0" stroke-width="1.0"/></g></svg>
<span class="t" style="left:8.60px;top:126.25px;font-size:9.6px;color:#3c3c3c;transform:scaleX(0.9521);">H6</span>
<svg class="a" style="left:66.50px;top:132.50px" width="7" height="4" viewBox="0 0 7 4"><path d="M0.5 0.5 H6.5 L3.5 3.6 Z" fill="#333"/></svg>
<svg class="a" style="left:88px;top:130px" width="3" height="3"><g transform="translate(0.30 0.00)"><rect x="0" y="0" width="1.60" height="1.60" fill="#e8e8e8"/></g></svg>
<svg class="a" style="left:88px;top:133px" width="3" height="3"><g transform="translate(0.30 0.50)"><rect x="0" y="0" width="1.60" height="1.60" fill="#e8e8e8"/></g></svg>
<svg class="a" style="left:88px;top:137px" width="3" height="3"><g transform="translate(0.30 0.00)"><rect x="0" y="0" width="1.60" height="1.60" fill="#e8e8e8"/></g></svg>
<svg class="a" style="left:100px;top:125px" width="81" height="19"><g transform="translate(0.50 0.80)"><rect x="0.5" y="0.5" width="78.30" height="16.30" fill="#b2b2b2" stroke="#c0c0c0" stroke-width="1.0"/></g></svg>
<svg class="a" style="left:110.50px;top:131.00px" width="7" height="7" viewBox="0 0 7 7"><path d="M0.5 0.5 L6.5 6.5 M6.5 0.5 L0.5 6.5" stroke="#8d8d8d" stroke-width="1.1"/></svg>
<svg class="a" style="left:135.00px;top:130.50px" width="10" height="8" viewBox="0 0 10 8"><path d="M0.8 4.5 L3.5 7 L9 0.8" fill="none" stroke="#8d8d8d" stroke-width="1.2"/></svg>
<span class="t" style="left:162.50px;top:125.25px;font-size:10.5px;color:#333;transform:scaleX(0.7937);font-weight:bold;font-style:italic;font-family:'Liberation Serif',serif;">f</span>
<span class="t" style="left:166.12px;top:126.25px;font-size:7px;color:#333;transform:scaleX(1.1096);font-weight:bold;font-style:italic;font-family:'Liberation Serif',serif;">x</span>
<svg class="a" style="left:183px;top:125px" width="813" height="19"><g transform="translate(0.00 0.80)"><rect x="0.5" y="0.5" width="810.00" height="16.30" fill="#b2b2b2" stroke="#c0c0c0" stroke-width="1.0"/></g></svg>
<svg class="a" style="left:984.00px;top:130.30px" width="8" height="8" viewBox="0 0 8 8"><path d="M2 3.0 L4 5.0 L6 3.0" fill="none" stroke="#222" stroke-width="1.3"/></svg>
<svg class="a" style="left:18px;top:165px" width="965" height="338"><g transform="translate(0.75 0.50)"><rect x="0" y="0" width="963.55" height="336.80" fill="#fff"/></g></svg>
<svg class="a" style="left:0.00px;top:0.00px" width="998" height="540" viewBox="0 0 998 540"><rect x="817.9" y="151" width="76.60000000000002" height="14.5" fill="#262626"/><rect x="817.9" y="164.3" width="77.10000000000002" height="1.5" fill="#1a7040"/><rect x="370.0" y="151.2" width="1" height="14" fill="#9a9a9a"/><rect x="416.5" y="151.2" width="1" height="14" fill="#9a9a9a"/><rect x="475.1" y="151.2" width="1" height="14" fill="#9a9a9a"/><rect x="568.3" y="151.2" width="1" height="14" fill="#9a9a9a"/><rect x="650.0" y="151.2" width="1" height="14" fill="#9a9a9a"/><rect x="740.8" y="151.2" width="1" height="14" fill="#9a9a9a"/><rect x="817.4" y="151.2" width="1" height="14" fill="#9a9a9a"/><rect x="894.0" y="151.2" width="1" height="14" fill="#9a9a9a"/><rect x="962.9" y="151.2" width="1" height="14" fill="#9a9a9a"/><rect x="370.0" y="165.5" width="1" height="336.8" fill="#dedede"/><rect x="416.5" y="165.5" width="1" height="336.8" fill="#dedede"/><rect x="475.1" y="165.5" width="1" height="336.8" fill="#dedede"/><rect x="568.3" y="165.5" width="1" height="336.8" fill="#dedede"/><rect x="650.0" y="165.5" width="1" height="336.8" fill="#dedede"/><rect x="740.8" y="165.5" width="1" height="336.8" fill="#dedede"/><rect x="817.4" y="165.5" width="1" height="336.8" fill="#dedede"/><rect x="894.0" y="165.5" width="1" height="336.8" fill="#dedede"/><rect x="962.9" y="165.5" width="1" height="336.8" fill="#dedede"/><rect x="18.75" y="179.61" width="963.55" height="1" fill="#dedede"/><rect x="0" y="179.61" width="18.75" height="1" fill="#8a8a8a"/><rect x="18.75" y="194.22" width="963.55" height="1" fill="#dedede"/><rect x="0" y="194.22" width="18.75" height="1" fill="#8a8a8a"/><rect x="18.75" y="208.83" width="963.55" height="1" fill="#dedede"/><rect x="0" y="208.83" width="18.75" height="1" fill="#8a8a8a"/><rect x="18.75" y="223.44" width="963.55" height="1" fill="#dedede"/><rect x="0" y="223.44" width="18.75" height="1" fill="#8a8a8a"/><rect x="18.75" y="238.05" width="963.55" height="1" fill="#dedede"/><rect x="0" y="238.05" width="18.75" height="1" fill="#8a8a8a"/><rect x="18.75" y="252.66" width="963.55" height="1" fill="#dedede"/><rect x="0" y="252.66" width="18.75" height="1" fill="#8a8a8a"/><rect x="18.75" y="267.27" width="963.55" height="1" fill="#dedede"/><rect x="0" y="267.27" width="18.75" height="1" fill="#8a8a8a"/><rect x="18.75" y="281.88" width="963.55" height="1" fill="#dedede"/><rect x="0" y="281.88" width="18.75" height="1" fill="#8a8a8a"/><rect x="18.75" y="296.49" width="963.55" height="1" fill="#dedede"/><rect x="0" y="296.49" width="18.75" height="1" fill="#8a8a8a"/><rect x="18.75" y="311.10" width="963.55" height="1" fill="#dedede"/><rect x="0" y="311.10" width="18.75" height="1" fill="#8a8a8a"/><rect x="18.75" y="325.71" width="963.55" height="1" fill="#dedede"/><rect x="0" y="325.71" width="18.75" height="1" fill="#8a8a8a"/><rect x="18.75" y="340.32" width="963.55" height="1" fill="#dedede"/><rect x="0" y="340.32" width="18.75" height="1" fill="#8a8a8a"/><rect x="18.75" y="354.93" width="963.55" height="1" fill="#dedede"/><rect x="0" y="354.93" width="18.75" height="1" fill="#8a8a8a"/><rect x="18.75" y="369.54" width="963.55" height="1" fill="#dedede"/><rect x="0" y="369.54" width="18.75" height="1" fill="#8a8a8a"/><rect x="18.75" y="384.15" width="963.55" height="1" fill="#dedede"/><rect x="0" y="384.15" width="18.75" height="1" fill="#8a8a8a"/><rect x="18.75" y="398.76" width="963.55" height="1" fill="#dedede"/><rect x="0" y="398.76" width="18.75" height="1" fill="#8a8a8a"/><rect x="18.75" y="413.37" width="963.55" height="1" fill="#dedede"/><rect x="0" y="413.37" width="18.75" height="1" fill="#8a8a8a"/><rect x="18.75" y="427.98" width="963.55" height="1" fill="#dedede"/><rect x="0" y="427.98" width="18.75" height="1" fill="#8a8a8a"/><rect x="18.75" y="442.59" width="963.55" height="1" fill="#dedede"/><rect x="0" y="442.59" width="18.75" height="1" fill="#8a8a8a"/><rect x="18.75" y="457.20" width="963.55" height="1" fill="#dedede"/><rect x="0" y="457.20" width="18.75" height="1" fill="#8a8a8a"/><rect x="18.75" y="471.81" width="963.55" height="1" fill="#dedede"/><rect x="0" y="471.81" width="18.75" height="1" fill="#8a8a8a"/><rect x="18.75" y="486.42" width="963.55" height="1" fill="#dedede"/><rect x="0" y="486.42" width="18.75" height="1" fill="#8a8a8a"/><rect x="18.75" y="501.03" width="963.55" height="1" fill="#dedede"/><rect x="0" y="501.03" width="18.75" height="1" fill="#8a8a8a"/><rect x="17.75" y="165.5" width="1" height="336.3" fill="#8a8a8a"/><rect x="0" y="238.55" width="18.75" height="14.61" fill="#262626"/><rect x="17.25" y="238.55" width="1.5" height="14.61" fill="#1a7040"/><path d="M16.6 154.4 V163.4 H7.4 Z" fill="#e6e6e6"/><rect x="18.2" y="151.2" width="1" height="14" fill="#9a9a9a"/><rect x="817.9" y="238.55" width="76.90000000000002" height="15.209999999999999" fill="none" stroke="#1a7040" stroke-width="1.6"/><rect x="892.3" y="251.16" width="4.6" height="4.6" fill="#1a7040" stroke="#fff" stroke-width="0.8"/></svg>
<span class="t" style="left:191.85px;top:149.25px;font-size:9.4px;color:#ececec;transform:scaleX(0.9458);">A</span>
<span class="t" style="left:390.97px;top:149.25px;font-size:9.4px;color:#ececec;transform:scaleX(0.9529);">B</span>
<span class="t" style="left:443.28px;top:149.25px;font-size:9.4px;color:#ececec;transform:scaleX(0.9529);">C</span>
<span class="t" style="left:519.18px;top:149.25px;font-size:9.4px;color:#ececec;transform:scaleX(0.9529);">D</span>
<span class="t" style="left:606.87px;top:149.25px;font-size:9.4px;color:#ececec;transform:scaleX(0.9529);">E</span>
<span class="t" style="left:693.37px;top:149.25px;font-size:9.4px;color:#ececec;transform:scaleX(0.9513);">F</span>
<span class="t" style="left:776.33px;top:149.25px;font-size:9.4px;color:#ececec;transform:scaleX(0.9473);">G</span>
<span class="t" style="left:853.18px;top:149.25px;font-size:9.4px;color:#fff;transform:scaleX(0.9529);">H</span>
<span class="t" style="left:927.91px;top:149.25px;font-size:9.4px;color:#ececec;transform:scaleX(0.9426);">I</span>
<span class="t" style="left:6.97px;top:165.25px;font-size:9.5px;color:#f0f0f0;transform:scaleX(0.9219);">1</span>
<span class="t" style="left:6.97px;top:179.25px;font-size:9.5px;color:#f0f0f0;transform:scaleX(0.9219);">2</span>
<span class="t" style="left:6.97px;top:194.25px;font-size:9.5px;color:#f0f0f0;transform:scaleX(0.9219);">3</span>
<span class="t" style="left:6.97px;top:209.25px;font-size:9.5px;color:#f0f0f0;transform:scaleX(0.9219);">4</span>
<span class="t" style="left:6.97px;top:223.25px;font-size:9.5px;color:#f0f0f0;transform:scaleX(0.9219);">5</span>
<span class="t" style="left:6.97px;top:238.25px;font-size:9.5px;color:#fff;transform:scaleX(0.9219);">6</span>
<span class="t" style="left:6.97px;top:252.25px;font-size:9.5px;color:#f0f0f0;transform:scaleX(0.9219);">7</span>
<span class="t" style="left:6.97px;top:267.25px;font-size:9.5px;color:#f0f0f0;transform:scaleX(0.9219);">8</span>
<span class="t" style="left:6.97px;top:282.25px;font-size:9.5px;color:#f0f0f0;transform:scaleX(0.9219);">9</span>
<span class="t" style="left:4.54px;top:296.25px;font-size:9.5px;color:#f0f0f0;transform:scaleX(0.9219);">10</span>
<span class="t" style="left:4.86px;top:311.25px;font-size:9.5px;color:#f0f0f0;transform:scaleX(0.9183);">11</span>
<span class="t" style="left:4.54px;top:325.25px;font-size:9.5px;color:#f0f0f0;transform:scaleX(0.9219);">12</span>
<span class="t" style="left:4.54px;top:340.25px;font-size:9.5px;color:#f0f0f0;transform:scaleX(0.9219);">13</span>
<span class="t" style="left:4.54px;top:355.25px;font-size:9.5px;color:#f0f0f0;transform:scaleX(0.9219);">14</span>
<span class="t" style="left:4.54px;top:369.25px;font-size:9.5px;color:#f0f0f0;transform:scaleX(0.9219);">15</span>
<span class="t" style="left:4.54px;top:384.25px;font-size:9.5px;color:#f0f0f0;transform:scaleX(0.9219);">16</span>
<span class="t" style="left:4.54px;top:398.25px;font-size:9.5px;color:#f0f0f0;transform:scaleX(0.9219);">17</span>
<span class="t" style="left:4.54px;top:413.25px;font-size:9.5px;color:#f0f0f0;transform:scaleX(0.9219);">18</span>
<span class="t" style="left:4.54px;top:428.25px;font-size:9.5px;color:#f0f0f0;transform:scaleX(0.9219);">19</span>
<span class="t" style="left:4.54px;top:442.25px;font-size:9.5px;color:#f0f0f0;transform:scaleX(0.9219);">20</span>
<span class="t" style="left:4.54px;top:457.25px;font-size:9.5px;color:#f0f0f0;transform:scaleX(0.9219);">21</span>
<span class="t" style="left:4.54px;top:472.25px;font-size:9.5px;color:#f0f0f0;transform:scaleX(0.9219);">22</span>
<span class="t" style="left:4.54px;top:486.25px;font-size:9.5px;color:#f0f0f0;transform:scaleX(0.9219);">23</span>
<span class="t" style="left:20.50px;top:165.25px;font-size:9.5px;color:#000;transform:scaleX(1.0750);-webkit-text-stroke:0.3px #000;">Metars</span>
<span class="t" style="left:372.00px;top:165.25px;font-size:9.5px;color:#000;transform:scaleX(0.9935);-webkit-text-stroke:0.3px #000;">Day</span>
<span class="t" style="left:418.80px;top:165.25px;font-size:9.5px;color:#000;transform:scaleX(0.9887);-webkit-text-stroke:0.3px #000;">Time (UTC)</span>
<span class="t" style="left:477.00px;top:165.25px;font-size:9.5px;color:#000;transform:scaleX(1.0734);-webkit-text-stroke:0.3px #000;">Wind Direction (°)</span>
<span class="t" style="left:571.00px;top:165.25px;font-size:9.5px;color:#000;transform:scaleX(1.0847);-webkit-text-stroke:0.3px #000;">Windspeed (kt)</span>
<span class="t" style="left:652.50px;top:165.25px;font-size:9.5px;color:#000;transform:scaleX(1.0622);-webkit-text-stroke:0.3px #000;">Temperature (°C)</span>
<span class="t" style="left:743.30px;top:165.25px;font-size:9.5px;color:#000;transform:scaleX(1.0328);-webkit-text-stroke:0.3px #000;">Dew Point (°C)</span>
<span class="t" style="left:820.00px;top:165.25px;font-size:9.5px;color:#000;transform:scaleX(1.0143);-webkit-text-stroke:0.3px #000;">Pressure (hPa)</span>
<span class="t" style="left:896.80px;top:165.25px;font-size:9.5px;color:#000;transform:scaleX(1.1271);-webkit-text-stroke:0.3px #000;">Visibility (m)</span>
<div class="a" style="left:0;top:0"><span class="t" style="left:21.10px;top:179.25px;font-size:9.5px;color:#000;transform:scaleX(0.9543);-webkit-text-stroke:0.3px #000;">WMKJ</span> 
<span class="t" style="left:50.80px;top:179.25px;font-size:9.5px;color:#000;transform:scaleX(0.9274);-webkit-text-stroke:0.3px #000;">010000Z</span> 
<span class="t" style="left:88.80px;top:179.25px;font-size:9.5px;color:#000;transform:scaleX(0.9046);-webkit-text-stroke:0.3px #000;">VRB02KT</span> 
<span class="t" style="left:130.60px;top:179.25px;font-size:9.5px;color:#000;transform:scaleX(0.9202);-webkit-text-stroke:0.3px #000;">9999</span> 
<span class="t" style="left:153.60px;top:179.25px;font-size:9.5px;color:#000;transform:scaleX(0.9038);-webkit-text-stroke:0.3px #000;">FEW010</span> 
<span class="t" style="left:190.80px;top:179.25px;font-size:9.5px;color:#000;transform:scaleX(0.8971);-webkit-text-stroke:0.3px #000;">FEW017CB</span> 
<span class="t" style="left:239.40px;top:179.25px;font-size:9.5px;color:#000;transform:scaleX(0.9297);-webkit-text-stroke:0.3px #000;">BKN130</span> 
<span class="t" style="left:275.70px;top:179.25px;font-size:9.5px;color:#000;transform:scaleX(1.0253);-webkit-text-stroke:0.3px #000;">24/24</span> 
<span class="t" style="left:302.90px;top:179.25px;font-size:9.5px;color:#000;transform:scaleX(0.9353);-webkit-text-stroke:0.3px #000;">Q1013</span></div>
<span class="t" style="left:409.36px;top:179.25px;font-size:9.5px;color:#000;transform:scaleX(0.9747);-webkit-text-stroke:0.3px #000;">1</span>
<span class="t" style="left:454.99px;top:179.25px;font-size:9.5px;color:#000;transform:scaleX(0.9747);-webkit-text-stroke:0.3px #000;">0:00</span>
<span class="t" style="left:643.36px;top:179.25px;font-size:9.5px;color:#000;transform:scaleX(0.9747);-webkit-text-stroke:0.3px #000;">2</span>
<span class="t" style="left:729.02px;top:179.25px;font-size:9.5px;color:#000;transform:scaleX(0.9747);-webkit-text-stroke:0.3px #000;">24</span>
<span class="t" style="left:805.62px;top:179.25px;font-size:9.5px;color:#000;transform:scaleX(0.9747);-webkit-text-stroke:0.3px #000;">24</span>
<span class="t" style="left:871.80px;top:179.25px;font-size:9.5px;color:#000;transform:scaleX(0.9747);-webkit-text-stroke:0.3px #000;">1013</span>
<span class="t" style="left:940.70px;top:179.25px;font-size:9.5px;color:#000;transform:scaleX(0.9747);-webkit-text-stroke:0.3px #000;">9999</span>
<div class="a" style="left:0;top:0"><span class="t" style="left:21.10px;top:194.25px;font-size:9.5px;color:#000;transform:scaleX(0.9543);-webkit-text-stroke:0.3px #000;">WMKJ</span> 
<span class="t" style="left:50.80px;top:194.25px;font-size:9.5px;color:#000;transform:scaleX(0.9274);-webkit-text-stroke:0.3px #000;">010100Z</span> 
<span class="t" style="left:88.80px;top:194.25px;font-size:9.5px;color:#000;transform:scaleX(0.9046);-webkit-text-stroke:0.3px #000;">VRB03KT</span> 
<span class="t" style="left:130.60px;top:194.25px;font-size:9.5px;color:#000;transform:scaleX(0.9202);-webkit-text-stroke:0.3px #000;">9999</span> 
<span class="t" style="left:153.60px;top:194.25px;font-size:9.5px;color:#000;transform:scaleX(0.9038);-webkit-text-stroke:0.3px #000;">FEW023</span> 
<span class="t" style="left:190.80px;top:194.25px;font-size:9.5px;color:#000;transform:scaleX(0.9184);-webkit-text-stroke:0.3px #000;">BKN130</span> 
<span class="t" style="left:226.70px;top:194.25px;font-size:9.5px;color:#000;transform:scaleX(1.0211);-webkit-text-stroke:0.3px #000;">26/24</span> 
<span class="t" style="left:253.80px;top:194.25px;font-size:9.5px;color:#000;transform:scaleX(0.9423);-webkit-text-stroke:0.3px #000;">Q1014</span></div>
<span class="t" style="left:409.36px;top:194.25px;font-size:9.5px;color:#000;transform:scaleX(0.9747);-webkit-text-stroke:0.3px #000;">1</span>
<span class="t" style="left:454.99px;top:194.25px;font-size:9.5px;color:#000;transform:scaleX(0.9747);-webkit-text-stroke:0.3px #000;">1:00</span>
<span class="t" style="left:643.36px;top:194.25px;font-size:9.5px;color:#000;transform:scaleX(0.9747);-webkit-text-stroke:0.3px #000;">3</span>
<span class="t" style="left:729.02px;top:194.25px;font-size:9.5px;color:#000;transform:scaleX(0.9747);-webkit-text-stroke:0.3px #000;">26</span>
<span class="t" style="left:805.62px;top:194.25px;font-size:9.5px;color:#000;transform:scaleX(0.9747);-webkit-text-stroke:0.3px #000;">24</span>
<span class="t" style="left:871.80px;top:194.25px;font-size:9.5px;color:#000;transform:scaleX(0.9747);-webkit-text-stroke:0.3px #000;">1014</span>
<span class="t" style="left:940.70px;top:194.25px;font-size:9.5px;color:#000;transform:scaleX(0.9747);-webkit-text-stroke:0.3px #000;">9999</span>
<div class="a" style="left:0;top:0"><span class="t" style="left:21.10px;top:209.25px;font-size:9.5px;color:#000;transform:scaleX(0.9543);-webkit-text-stroke:0.3px #000;">WMKJ</span> 
<span class="t" style="left:50.80px;top:209.25px;font-size:9.5px;color:#000;transform:scaleX(0.9274);-webkit-text-stroke:0.3px #000;">010200Z</span> 
<span class="t" style="left:88.80px;top:209.25px;font-size:9.5px;color:#000;transform:scaleX(0.9046);-webkit-text-stroke:0.3px #000;">VRB03KT</span> 
<span class="t" style="left:130.60px;top:209.25px;font-size:9.5px;color:#000;transform:scaleX(0.9202);-webkit-text-stroke:0.3px #000;">9999</span> 
<span class="t" style="left:153.60px;top:209.25px;font-size:9.5px;color:#000;transform:scaleX(0.9038);-webkit-text-stroke:0.3px #000;">FEW018</span> 
<span class="t" style="left:190.40px;top:209.25px;font-size:9.5px;color:#000;transform:scaleX(0.8719);-webkit-text-stroke:0.3px #000;">SCT140</span> 
<span class="t" style="left:224.20px;top:209.25px;font-size:9.5px;color:#000;transform:scaleX(0.9410);-webkit-text-stroke:0.3px #000;">BKN280</span> 
<span class="t" style="left:260.70px;top:209.25px;font-size:9.5px;color:#000;transform:scaleX(1.0001);-webkit-text-stroke:0.3px #000;">28/25</span> 
<span class="t" style="left:287.60px;top:209.25px;font-size:9.5px;color:#000;transform:scaleX(0.9423);-webkit-text-stroke:0.3px #000;">Q1014</span></div>
<span class="t" style="left:409.36px;top:209.25px;font-size:9.5px;color:#000;transform:scaleX(0.9747);-webkit-text-stroke:0.3px #000;">1</span>
<span class="t" style="left:454.99px;top:209.25px;font-size:9.5px;color:#000;transform:scaleX(0.9747);-webkit-text-stroke:0.3px #000;">2:00</span>
<span class="t" style="left:643.36px;top:209.25px;font-size:9.5px;color:#000;transform:scaleX(0.9747);-webkit-text-stroke:0.3px #000;">3</span>
<span class="t" style="left:729.02px;top:209.25px;font-size:9.5px;color:#000;transform:scaleX(0.9747);-webkit-text-stroke:0.3px #000;">28</span>
<span class="t" style="left:805.62px;top:209.25px;font-size:9.5px;color:#000;transform:scaleX(0.9747);-webkit-text-stroke:0.3px #000;">25</span>
<span class="t" style="left:871.80px;top:209.25px;font-size:9.5px;color:#000;transform:scaleX(0.9747);-webkit-text-stroke:0.3px #000;">1014</span>
<span class="t" style="left:940.70px;top:209.25px;font-size:9.5px;color:#000;transform:scaleX(0.9747);-webkit-text-stroke:0.3px #000;">9999</span>
<div class="a" style="left:0;top:0"><span class="t" style="left:21.10px;top:223.25px;font-size:9.5px;color:#000;transform:scaleX(0.9543);-webkit-text-stroke:0.3px #000;">WMKJ</span> 
<span class="t" style="left:50.80px;top:223.25px;font-size:9.5px;color:#000;transform:scaleX(0.9274);-webkit-text-stroke:0.3px #000;">010300Z</span> 
<span class="t" style="left:88.80px;top:223.25px;font-size:9.5px;color:#000;transform:scaleX(0.9430);-webkit-text-stroke:0.3px #000;">04011KT</span> 
<span class="t" style="left:127.80px;top:223.25px;font-size:9.5px;color:#000;transform:scaleX(0.9146);-webkit-text-stroke:0.3px #000;">350V070</span> 
<span class="t" style="left:167.00px;top:223.25px;font-size:9.5px;color:#000;transform:scaleX(0.9178);-webkit-text-stroke:0.3px #000;">9999</span> 
<span class="t" style="left:189.90px;top:223.25px;font-size:9.5px;color:#000;transform:scaleX(0.8519);-webkit-text-stroke:0.3px #000;">SCT018</span> 
<span class="t" style="left:223.30px;top:223.25px;font-size:9.5px;color:#000;transform:scaleX(0.8748);-webkit-text-stroke:0.3px #000;">SCT140</span> 
<span class="t" style="left:257.30px;top:223.25px;font-size:9.5px;color:#000;transform:scaleX(0.9269);-webkit-text-stroke:0.3px #000;">BKN280</span> 
<span class="t" style="left:293.20px;top:223.25px;font-size:9.5px;color:#000;transform:scaleX(1.0001);-webkit-text-stroke:0.3px #000;">29/25</span> 
<span class="t" style="left:320.20px;top:223.25px;font-size:9.5px;color:#000;transform:scaleX(0.9423);-webkit-text-stroke:0.3px #000;">Q1014</span></div>
<span class="t" style="left:409.36px;top:223.25px;font-size:9.5px;color:#000;transform:scaleX(0.9747);-webkit-text-stroke:0.3px #000;">1</span>
<span class="t" style="left:454.99px;top:223.25px;font-size:9.5px;color:#000;transform:scaleX(0.9747);-webkit-text-stroke:0.3px #000;">3:00</span>
<span class="t" style="left:556.02px;top:223.25px;font-size:9.5px;color:#000;transform:scaleX(0.9747);-webkit-text-stroke:0.3px #000;">40</span>
<span class="t" style="left:638.87px;top:223.25px;font-size:9.5px;color:#000;transform:scaleX(0.9747);-webkit-text-stroke:0.3px #000;">11</span>
<span class="t" style="left:729.02px;top:223.25px;font-size:9.5px;color:#000;transform:scaleX(0.9747);-webkit-text-stroke:0.3px #000;">29</span>
<span class="t" style="left:805.62px;top:223.25px;font-size:9.5px;color:#000;transform:scaleX(0.9747);-webkit-text-stroke:0.3px #000;">25</span>
<span class="t" style="left:871.80px;top:223.25px;font-size:9.5px;color:#000;transform:scaleX(0.9747);-webkit-text-stroke:0.3px #000;">1014</span>
<span class="t" style="left:940.70px;top:223.25px;font-size:9.5px;color:#000;transform:scaleX(0.9747);-webkit-text-stroke:0.3px #000;">9999</span>
<svg class="a" style="left:984px;top:153px" width="12" height="352"><g transform="translate(0.90 0.00)"><rect x="0" y="0" width="10.70" height="350.00" fill="#545454"/></g></svg>
<svg class="a" style="left:984px;top:153px" width="12" height="12"><g transform="translate(0.90 0.10)"><rect x="0.5" y="0.5" width="9.70" height="9.20" fill="#989898" stroke="#adadad" stroke-width="1.0"/></g></svg>
<svg class="a" style="left:987.30px;top:156.30px" width="6" height="4" viewBox="0 0 6 4"><path d="M0.3 3.7 L3 0.6 L5.7 3.7 Z" fill="#222"/></svg>
<svg class="a" style="left:984px;top:163px" width="12" height="315"><g transform="translate(0.90 0.80)"><rect x="0.5" y="0.5" width="9.70" height="312.40" fill="#989898" stroke="#adadad" stroke-width="1.0"/></g></svg>
<svg class="a" style="left:984px;top:492px" width="12" height="12"><g transform="translate(0.90 0.80)"><rect x="0.5" y="0.5" width="9.70" height="9.20" fill="#989898" stroke="#adadad" stroke-width="1.0"/></g></svg>
<svg class="a" style="left:987.30px;top:496.20px" width="6" height="4" viewBox="0 0 6 4"><path d="M0.3 0.3 L3 3.4 L5.7 0.3 Z" fill="#222"/></svg>
<svg class="a" style="left:18.00px;top:508.50px" width="8" height="8" viewBox="0 0 8 8"><path d="M5.5 1.2 L2.5 4 L5.5 6.8 Z" fill="#9a9a9a"/></svg>
<svg class="a" style="left:38.00px;top:508.50px" width="8" height="8" viewBox="0 0 8 8"><path d="M2.5 1.2 L5.5 4 L2.5 6.8 Z" fill="#9a9a9a"/></svg>
<svg class="a" style="left:73px;top:502px" width="48" height="20"><g transform="translate(0.30 0.30)"><rect x="0" y="0" width="46.90" height="18.40" fill="#fdfdfd"/></g></svg>
<svg class="a" style="left:73px;top:519px" width="48" height="3"><g transform="translate(0.30 0.30)"><rect x="0" y="0" width="46.90" height="1.50" fill="#1a7040"/></g></svg>
<span class="t" style="left:81.80px;top:504.25px;font-size:10.2px;color:#1a7040;transform:scaleX(0.8608);font-weight:bold;">Sheet1</span>
<svg class="a" style="left:143.80px;top:506.50px" width="13" height="13" viewBox="0 0 13 13"><circle cx="6.5" cy="6.5" r="5.8" fill="none" stroke="#f0f0f0" stroke-width="1.3"/><path d="M6.5 3.5 V9.5 M3.5 6.5 H9.5" stroke="#f0f0f0" stroke-width="1.3"/></svg>
<svg class="a" style="left:598px;top:509px" width="3" height="3"><g transform="translate(0.00 0.70)"><rect x="0" y="0" width="1.60" height="1.60" fill="#e8e8e8"/></g></svg>
<svg class="a" style="left:598px;top:512px" width="3" height="3"><g transform="translate(0.00 0.50)"><rect x="0" y="0" width="1.60" height="1.60" fill="#e8e8e8"/></g></svg>
<svg class="a" style="left:598px;top:515px" width="3" height="3"><g transform="translate(0.00 0.30)"><rect x="0" y="0" width="1.60" height="1.60" fill="#e8e8e8"/></g></svg>
<svg class="a" style="left:611px;top:507px" width="373" height="12"><g transform="translate(0.00 0.80)"><rect x="0" y="0" width="371.40" height="10.50" fill="#545454"/></g></svg>
<svg class="a" style="left:611px;top:507px" width="12" height="12"><g transform="translate(0.00 0.80)"><rect x="0.5" y="0.5" width="9.50" height="9.50" fill="#989898" stroke="#adadad" stroke-width="1.0"/></g></svg>
<svg class="a" style="left:614.00px;top:510.00px" width="4" height="6" viewBox="0 0 4 6"><path d="M3.7 0.3 L0.6 3 L3.7 5.7 Z" fill="#222"/></svg>
<svg class="a" style="left:621px;top:507px" width="312" height="12"><g transform="translate(0.50 0.80)"><rect x="0.5" y="0.5" width="309.30" height="9.50" fill="#989898" stroke="#adadad" stroke-width="1.0"/></g></svg>
<svg class="a" style="left:971px;top:507px" width="12" height="12"><g transform="translate(0.80 0.80)"><rect x="0.5" y="0.5" width="9.60" height="9.50" fill="#989898" stroke="#adadad" stroke-width="1.0"/></g></svg>
<svg class="a" style="left:975.30px;top:510.00px" width="4" height="6" viewBox="0 0 4 6"><path d="M0.3 0.3 L3.4 3 L0.3 5.7 Z" fill="#222"/></svg>
<svg class="a" style="left:788.30px;top:526.00px" width="10" height="10" viewBox="0 0 10 10"><rect x="0.5" y="0.5" width="9" height="9" fill="none" stroke="#333" stroke-width="1"/><path d="M3.5 0.5 V9.5 M6.5 0.5 V9.5 M0.5 3.5 H9.5 M0.5 6.5 H9.5" stroke="#333" stroke-width="0.9"/></svg>
<svg class="a" style="left:817.30px;top:526.00px" width="11" height="10" viewBox="0 0 11 10"><rect x="0.5" y="0.5" width="10" height="9" rx="1" fill="none" stroke="#333" stroke-width="1"/><rect x="3.3" y="2.3" width="4.4" height="5.4" fill="none" stroke="#333" stroke-width="0.9"/></svg>
<svg class="a" style="left:846.50px;top:525.80px" width="11" height="10" viewBox="0 0 11 10"><rect x="0.5" y="0.5" width="10" height="9" fill="none" stroke="#333" stroke-width="1"/><path d="M3.5 0.5 V5.5 H7.5 V0.5" fill="none" stroke="#333" stroke-width="0.9"/></svg>
<svg class="a" style="left:871px;top:530px" width="7" height="3"><g transform="translate(0.00 0.80)"><rect x="0" y="0" width="5.00" height="1.00" fill="#333"/></g></svg>
<svg class="a" style="left:880px;top:530px" width="74" height="2"><g transform="translate(0.50 0.90)"><rect x="0" y="0" width="72.00" height="0.80" fill="#8c8a88"/></g></svg>
<svg class="a" style="left:915px;top:526px" width="5" height="10"><g transform="translate(0.60 0.80)"><rect x="0" y="0" width="3.00" height="8.20" fill="#6e6c6a"/></g></svg>
<svg class="a" style="left:957px;top:530px" width="7" height="3"><g transform="translate(0.00 0.60)"><rect x="0" y="0" width="5.60" height="1.00" fill="#333"/></g></svg>
<svg class="a" style="left:959px;top:528px" width="3" height="7"><g transform="translate(0.30 0.30)"><rect x="0" y="0" width="1.00" height="5.60" fill="#333"/></g></svg>
<span class="t" style="left:973.20px;top:521.25px;font-size:8.8px;color:#2a2a2a;transform:scaleX(0.8345);">100%</span>
</div></body></html>
